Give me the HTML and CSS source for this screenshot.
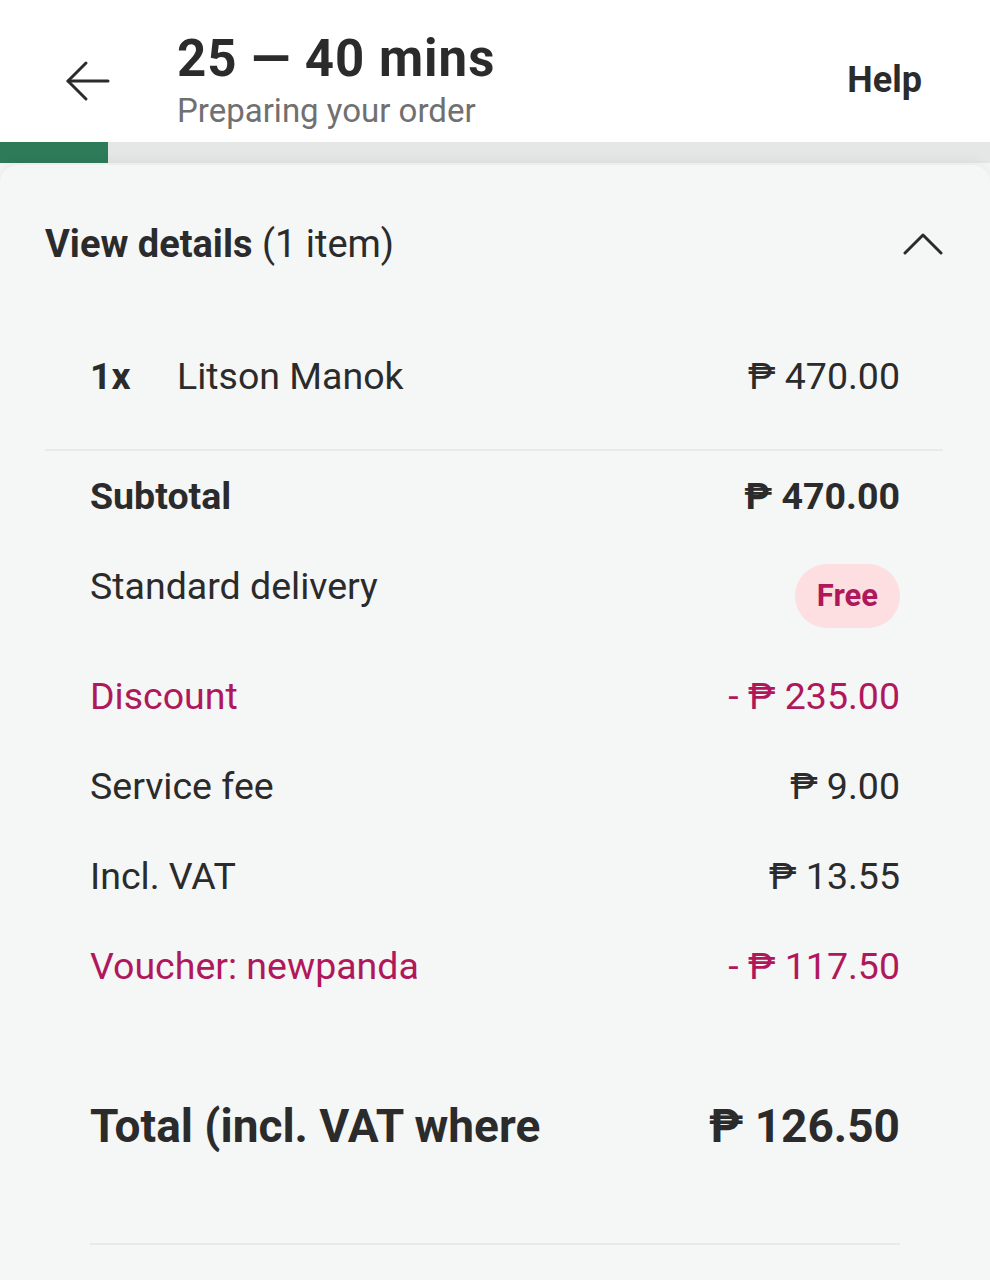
FILE: index.html
```html
<!DOCTYPE html>
<html lang="en">
<head>
  <meta charset="UTF-8" />
  <meta name="viewport" content="width=device-width, initial-scale=1.0" />
  <title>Order status</title>
  <link rel="stylesheet" href="styles.css">
</head>
<body>
  <header class="topbar">
    <button class="back" aria-label="Back">
      <svg width="48" height="48" viewBox="0 0 48 48" fill="none" stroke="#2b2b2b" stroke-width="3" stroke-linecap="round" stroke-linejoin="round">
        <path d="M44 24H4" />
        <path d="M22 6L4 24l18 18" />
      </svg>
    </button>
    <div class="eta">
      <div class="eta-time">25 — 40 mins</div>
      <div class="eta-status">Preparing your order</div>
    </div>
    <a class="help">Help</a>
  </header>

  <div class="progress"><div class="progress-fill"></div></div>

  <section class="card">
    <div class="details-head">
      <div class="details-title"><b>View details</b> (1 item)</div>
      <svg class="chevron" width="40" height="24" viewBox="0 0 40 24" fill="none" stroke="#2b2b2b" stroke-width="3" stroke-linecap="round" stroke-linejoin="round">
        <path d="M2 22L20 4l18 18" />
      </svg>
    </div>

    <div class="lines">
      <div class="row item">
        <span class="qty">1x</span>
        <span class="name">Litson Manok</span>
        <span class="amount">₱ 470.00</span>
      </div>
    </div>

    <div class="divider"></div>

    <div class="lines">
      <div class="row bold">
        <span>Subtotal</span>
        <span>₱ 470.00</span>
      </div>
      <div class="row delivery">
        <span>Standard delivery</span>
        <span class="pill">Free</span>
      </div>
      <div class="row pink">
        <span>Discount</span>
        <span>- ₱ 235.00</span>
      </div>
      <div class="row">
        <span>Service fee</span>
        <span>₱ 9.00</span>
      </div>
      <div class="row">
        <span>Incl. VAT</span>
        <span>₱ 13.55</span>
      </div>
      <div class="row pink">
        <span>Voucher: newpanda</span>
        <span>- ₱ 117.50</span>
      </div>
      <div class="row total">
        <span>Total (incl. VAT where</span>
        <span>₱ 126.50</span>
      </div>
      <div class="divider short"></div>
    </div>
  </section>
</body>
</html>
```

FILE: styles.css
```css
body {
  font-family: Roboto, "Liberation Sans", sans-serif;
  background: #f5f6f6;
  color: #2b2b2b;
  margin: 0;
  padding: 0;
}
.topbar {
  height: 142px;
  background: #ffffff;
  display: flex;
  align-items: center;
  padding: 22px 68px 0 64px;
  box-sizing: border-box;
}
.back {
  background: none;
  border: none;
  padding: 0;
  width: 48px;
  height: 48px;
  margin-top: -2px;
}
.eta {
  margin-left: 65px;
  flex: 1;
  margin-top: -2px;
}
.eta-time {
  font-size: 51px;
  font-weight: 700;
  letter-spacing: 1px;
  line-height: 56px;
}
.eta-status {
  font-size: 33px;
  color: #707070;
  line-height: 40px;
  margin-top: 4px;
}
.help {
  font-size: 36px;
  font-weight: 700;
  margin-top: -4px;
}
.progress {
  height: 21px;
  background: #e5e6e6;
}
.progress-fill {
  width: 108px;
  height: 100%;
  background: #2e7b59;
}
.card {
  margin-top: 2px;
  padding: 34px 47px 40px 45px;
  background: #f5f6f6;
  border-radius: 18px 18px 0 0;
  box-shadow: 0 -4px 12px rgba(0, 0, 0, 0.05);
}
.details-head {
  height: 90px;
  display: flex;
  align-items: center;
  justify-content: space-between;
}
.details-title {
  font-size: 38px;
}
.details-title b {
  font-weight: 700;
}
.chevron {
  margin-top: -3px;
}
.lines {
  padding: 0 43px 0 45px;
}
.row {
  height: 90px;
  display: flex;
  align-items: center;
  justify-content: space-between;
  font-size: 37.5px;
}
.row.item {
  margin-top: 42px;
  justify-content: flex-start;
}
.qty {
  font-weight: 700;
  width: 87px;
}
.name {
  flex: 1;
}
.divider {
  height: 2px;
  background: #e8e9e9;
  margin-top: 28px;
}
.bold {
  font-weight: 700;
}
.delivery {
  height: 110px;
  align-items: flex-start;
  line-height: 90px;
}
.pill {
  margin-top: 23px;
  height: 64px;
  line-height: 64px;
  padding: 0 22px;
  border-radius: 32px;
  background: #fddfe1;
  color: #b0185c;
  font-weight: 700;
  font-size: 31px;
}
.pink {
  color: #b0185c;
}
.total {
  margin-top: 70px;
  font-size: 46px;
  font-weight: 700;
  letter-spacing: 0;
}
.divider.short {
  margin-top: 72px;
}
```
